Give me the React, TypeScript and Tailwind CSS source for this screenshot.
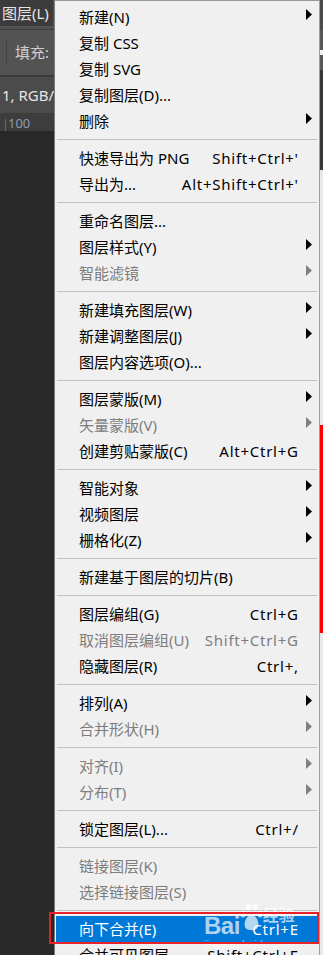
import React from "react";

type Row =
  | { sep: true }
  | {
      sep?: false;
      label: string;
      shortcut?: string;
      arrow?: boolean;
      disabled?: boolean;
      highlight?: boolean;
    };

const rows: Row[] = [
  { label: "新建(N)", arrow: true },
  { label: "复制 CSS" },
  { label: "复制 SVG" },
  { label: "复制图层(D)..." },
  { label: "删除", arrow: true },
  { sep: true },
  { label: "快速导出为 PNG", shortcut: "Shift+Ctrl+'" },
  { label: "导出为...", shortcut: "Alt+Shift+Ctrl+'" },
  { sep: true },
  { label: "重命名图层..." },
  { label: "图层样式(Y)", arrow: true },
  { label: "智能滤镜", arrow: true, disabled: true },
  { sep: true },
  { label: "新建填充图层(W)", arrow: true },
  { label: "新建调整图层(J)", arrow: true },
  { label: "图层内容选项(O)..." },
  { sep: true },
  { label: "图层蒙版(M)", arrow: true },
  { label: "矢量蒙版(V)", arrow: true, disabled: true },
  { label: "创建剪贴蒙版(C)", shortcut: "Alt+Ctrl+G" },
  { sep: true },
  { label: "智能对象", arrow: true },
  { label: "视频图层", arrow: true },
  { label: "栅格化(Z)", arrow: true },
  { sep: true },
  { label: "新建基于图层的切片(B)" },
  { sep: true },
  { label: "图层编组(G)", shortcut: "Ctrl+G" },
  { label: "取消图层编组(U)", shortcut: "Shift+Ctrl+G", disabled: true },
  { label: "隐藏图层(R)", shortcut: "Ctrl+," },
  { sep: true },
  { label: "排列(A)", arrow: true },
  { label: "合并形状(H)", arrow: true, disabled: true },
  { sep: true },
  { label: "对齐(I)", arrow: true, disabled: true },
  { label: "分布(T)", arrow: true, disabled: true },
  { sep: true },
  { label: "锁定图层(L)...", shortcut: "Ctrl+/" },
  { sep: true },
  { label: "链接图层(K)", disabled: true },
  { label: "选择链接图层(S)", disabled: true },
  { sep: true },
  { label: "向下合并(E)", shortcut: "Ctrl+E", highlight: true },
  { label: "合并可见图层", shortcut: "Shift+Ctrl+E" },
];

const font = {
  fontFamily: '"Noto Sans", "Noto Sans CJK SC", sans-serif',
};

function Arrow({ disabled }: { disabled?: boolean }) {
  return (
    <svg width="6" height="11" viewBox="0 0 6 11" className="mb-[5px] ml-[8px]">
      <polygon points="0,0 6,5.5 0,11" fill={disabled ? "#808080" : "#000000"} />
    </svg>
  );
}

export default function App() {
  return (
    <div
      className="relative w-[323px] h-[955px] overflow-hidden bg-[#282828]"
      style={font}
    >
      {/* Background Photoshop UI (left) */}
      <div className="flex flex-col w-full">
        <div className="h-[29px] bg-[#535353] flex items-start">
          <div className="h-[26px] w-[53px] bg-[#3c3c3c] flex items-center pl-[2px] text-[15px] text-[#e6e6e6]">
            图层(L)
          </div>
        </div>
        <div className="h-px bg-[#3e3e3e]" />
        <div className="h-[45px] bg-[#535353] flex items-center">
          <div className="w-px h-[24px] bg-[#444444] ml-[6px]" />
          <span className="ml-[8px] text-[15px] text-[#cfcfcf]">填充:</span>
        </div>
        <div className="h-[2px] bg-[#3a3a3a]" />
        <div className="h-[36px] bg-[#4b4b4b] flex items-center pl-[2px] text-[15px] text-[#e6e6e6]">
          1, RGB/8
        </div>
        <div className="h-[18px] bg-[#3d3d3d] flex items-end">
          <div className="w-px h-[12px] bg-[#6a6a6a] ml-[5px]" />
          <span className="ml-[2px] text-[13px] leading-[15px] text-[#8f9bb3]">100</span>
        </div>
      </div>

      {/* right edge strip */}
      <div className="absolute right-0 top-0 w-[3px] h-full bg-[#e9e9e9]">
        <div className="h-[30px] bg-[#4a4a4a]" />
        <div className="h-[20px] bg-[#595959]" />
        <div className="h-[5px] bg-[#f2f2f2]" />
        <div className="h-[15px] bg-[#595959]" />
        <div className="h-[100px] bg-[#383838]" />
      </div>
      <div className="absolute right-0 top-[425px] w-[3px] h-[208px] bg-[#ff0000]" />

      {/* Dropdown menu */}
      <div className="absolute left-[54px] top-0 w-[266px] bg-[#f0f0f0] border-l border-t border-r border-l-[#7a7a7a] border-t-[#9a9a9a] border-r-[#a0a0a0] pt-[3px]">
        {rows.map((r, i) =>
          r.sep ? (
            <div key={i} className="py-[5px]">
              <div className="h-px mx-[2px] bg-[#c2c2c2]" />
            </div>
          ) : (
            <div
              key={i}
              className={`h-[26px] flex items-center pl-[23px] text-[15px] leading-none mx-[1px] ${
                r.highlight ? "bg-[#0078d7] text-white" : r.disabled ? "text-[#7d7d7d]" : "text-black"
              }`}
            >
              <span className="whitespace-nowrap">{r.label}</span>
              <span className="flex-1" />
              {r.shortcut && (
                <span className="whitespace-nowrap tracking-[0.75px] -mr-[0.75px]">{r.shortcut}</span>
              )}
              <div className="w-[20px] flex items-center">
                {r.arrow && <Arrow disabled={r.disabled} />}
              </div>
            </div>
          )
        )}
      </div>

      {/* Baidu watermark */}
      <div className="absolute left-[204px] top-[898px] w-[96px] h-[56px] text-white/70 pointer-events-none">
        <div className="flex items-start h-[40px]">
          <span
            className="text-[24px] font-bold leading-none mt-[16px] tracking-[-0.5px]"
            style={{ fontFamily: '"Liberation Sans", sans-serif' }}
          >
            Bai
          </span>
          <svg width="24" height="30" viewBox="0 0 24 30" className="mt-[4px] -ml-[1px]">
            <g fill="rgba(255,255,255,0.7)">
              <ellipse cx="4" cy="12" rx="2.8" ry="3.4" />
              <ellipse cx="9.5" cy="5" rx="2.8" ry="3.4" />
              <ellipse cx="16" cy="5" rx="2.8" ry="3.4" />
              <ellipse cx="21" cy="12" rx="2.8" ry="3.4" />
              <path d="M12.5 13 C7 13 4 22 6.5 26 C9 29 16 29 18.5 26 C21 22 18 13 12.5 13 Z" />
            </g>
          </svg>
          <span
            className="text-[16px] font-bold leading-none mt-[8px]"
            style={{ fontFamily: '"Noto Sans CJK SC", sans-serif' }}
          >
            经验
          </span>
        </div>
        <div
          className="text-[11px] leading-none mt-[1px] text-white/60"
          style={{ fontFamily: '"Liberation Sans", sans-serif' }}
        >
          jingyan.baidu.com
        </div>
      </div>

      {/* red annotation box */}
      <div className="absolute left-[49px] top-[912px] w-[270px] h-[32px] border-2 border-[#e8202a]" />
    </div>
  );
}
